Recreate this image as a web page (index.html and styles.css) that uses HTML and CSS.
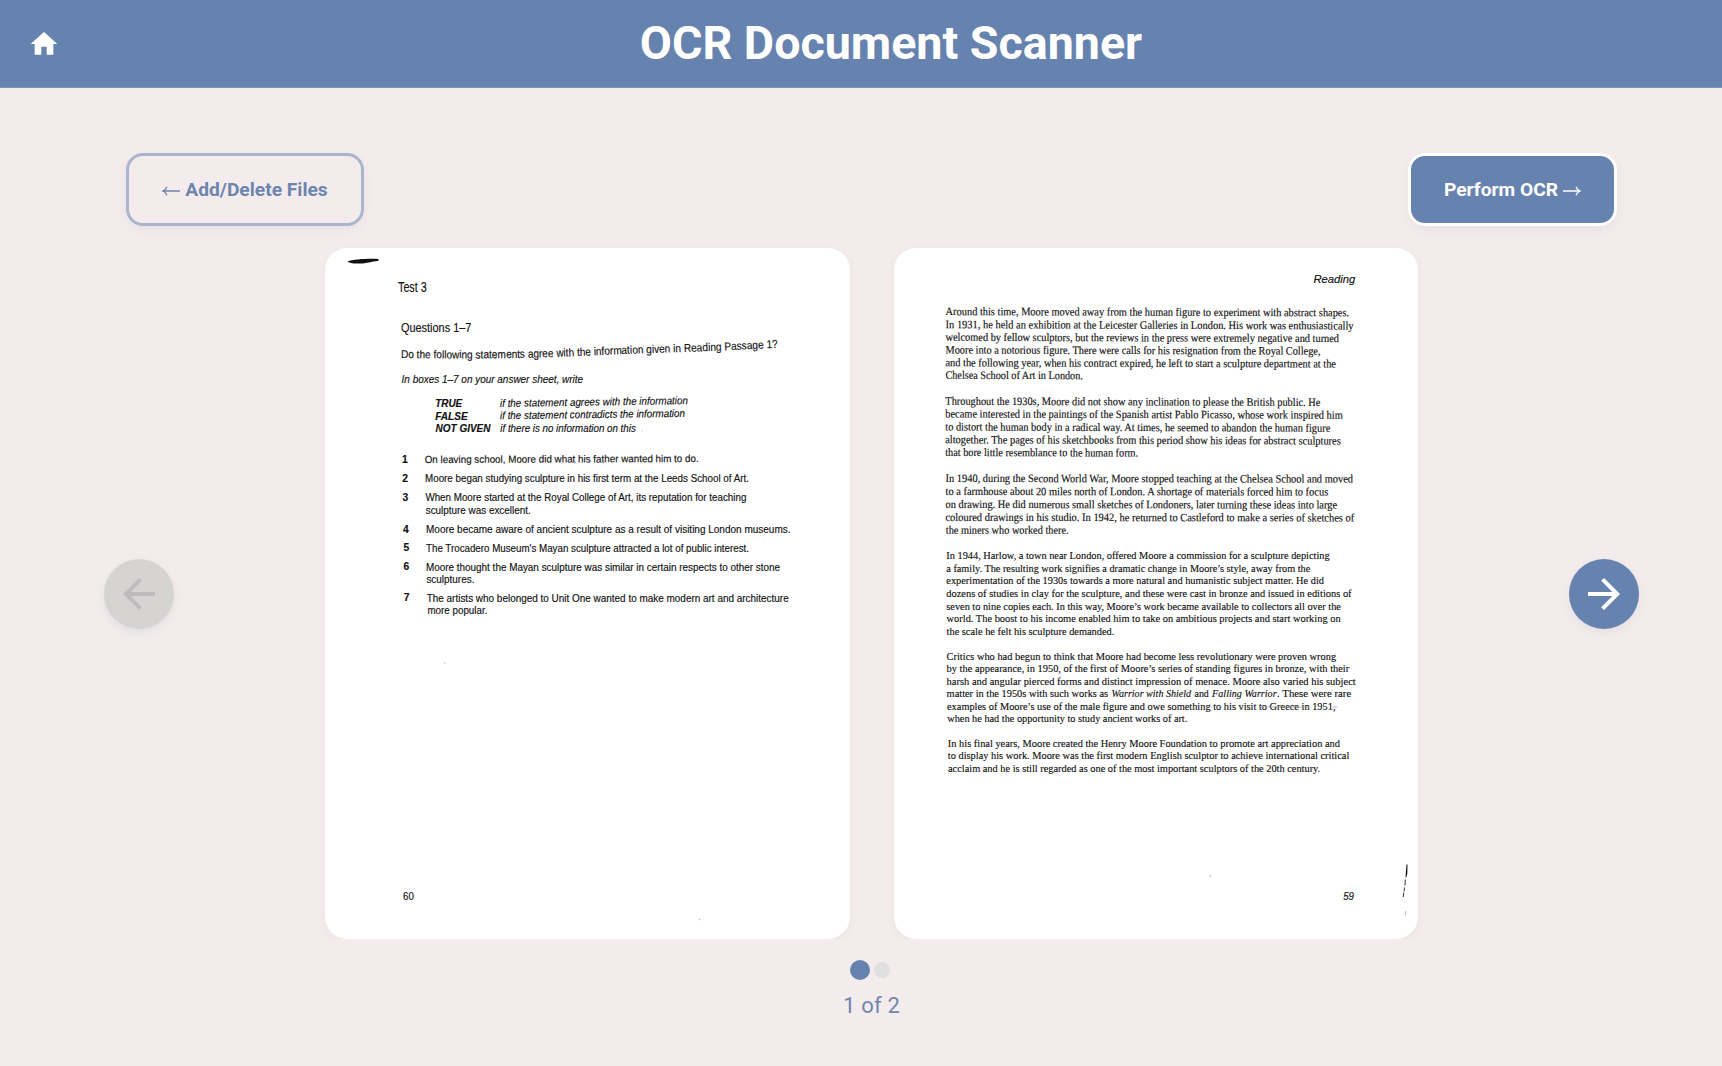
FILE: index.html
```html
<!DOCTYPE html>
<html lang="en">
<head>
<meta charset="utf-8">
<title>OCR Document Scanner</title>
<link rel="stylesheet" href="styles.css">
</head>
<body>
<header class="header">
  <a class="home" aria-label="Home"><svg viewBox="0 0 24 24"><path d="M10 20v-6h4v6h5v-8h3L12 3 2 12h3v8z"/></svg></a>
  <h1 class="title">OCR Document Scanner</h1>
</header>
<main class="main">
  <div class="toolbar">
    <button class="btn btn-outline"><svg class="arrow" viewBox="0 0 18 12"><path d="M1 6h17M5 1.800Q4 4.800 .8 6Q4 7.200 5 10.200"/></svg>Add/Delete Files</button>
    <button class="btn btn-solid">Perform OCR<svg class="arrow" viewBox="0 0 18 12"><path d="M0 6h17M13 1.800Q14 4.800 17.200 6Q14 7.200 13 10.200"/></svg></button>
  </div>
  <section class="carousel">
    <button class="nav nav-disabled" aria-label="Previous"><svg viewBox="0 0 24 24"><path d="M20 11H7.83l5.59-5.59L12 4l-8 8 8 8 1.41-1.41L7.83 13H20v-2z"/></svg></button>
    <div class="pages">
      <article class="page">
        <svg class="scan sans" viewBox="325 247.5 524.5 691.5">
          <path d="M347.500 261c6-2.300 21-3 31-2.500v1.700c-8 1-11 2.600-19 2.800-6 .3-10-.4-12-2z"/>
          <text x="398" y="291.700" font-size="14" textLength="28.700" lengthAdjust="spacingAndGlyphs">Test 3</text>
          <text x="400.900" y="331.500" font-size="12" textLength="70.500" lengthAdjust="spacingAndGlyphs">Questions 1–7</text>
          <path id="bend" fill="none" stroke="none" d="M400.900 357.500C500 359 560 356.500 600 354.500S720 351 790 346.500"/>
          <text font-size="11.400" textLength="377" lengthAdjust="spacingAndGlyphs"><textPath href="#bend" textLength="377" lengthAdjust="spacingAndGlyphs">Do the following statements agree with the information given in Reading Passage 1?</textPath></text>
          <g font-style="italic" font-size="10.800">
            <text x="401.600" y="382" textLength="181.500" lengthAdjust="spacingAndGlyphs">In boxes 1–7 on your answer sheet, write</text>
            <g font-weight="bold">
              <text x="435.200" y="406.500" textLength="27" lengthAdjust="spacingAndGlyphs">TRUE</text>
              <text x="435.200" y="419" textLength="32.500" lengthAdjust="spacingAndGlyphs">FALSE</text>
              <text x="435.500" y="431.300" textLength="55" lengthAdjust="spacingAndGlyphs">NOT GIVEN</text>
            </g>
            <text x="500" y="406.500" textLength="188" lengthAdjust="spacingAndGlyphs" transform="rotate(-.9 500 406.700)">if the statement agrees with the information</text>
            <text x="500" y="418.700" textLength="185" lengthAdjust="spacingAndGlyphs" transform="rotate(-.7 500 419)">if the statement contradicts the information</text>
            <text x="500.300" y="431" textLength="135.500" lengthAdjust="spacingAndGlyphs">if there is no information on this</text>
          </g>
          <g font-weight="bold" font-size="10.300">
            <text x="402" y="462.300">1</text><text x="402.300" y="481.300">2</text><text x="402.600" y="500.200">3</text><text x="403" y="532">4</text><text x="403.400" y="550.900">5</text><text x="403.600" y="569.900">6</text><text x="403.800" y="600.300">7</text>
          </g>
          <g font-size="10.300">
            <text x="424.700" y="462.500" textLength="274" lengthAdjust="spacingAndGlyphs" transform="rotate(-.2 425 462.700)">On leaving school, Moore did what his father wanted him to do.</text>
            <text x="425" y="481.500" textLength="324" lengthAdjust="spacingAndGlyphs">Moore began studying sculpture in his first term at the Leeds School of Art.</text>
            <text x="425.400" y="500.900" textLength="321" lengthAdjust="spacingAndGlyphs">When Moore started at the Royal College of Art, its reputation for teaching</text>
            <text x="425.700" y="513.300" textLength="105" lengthAdjust="spacingAndGlyphs">sculpture was excellent.</text>
            <text x="426" y="532.200" textLength="364.500" lengthAdjust="spacingAndGlyphs">Moore became aware of ancient sculpture as a result of visiting London museums.</text>
            <text x="426" y="551.200" textLength="323" lengthAdjust="spacingAndGlyphs">The Trocadero Museum's Mayan sculpture attracted a lot of public interest.</text>
            <text x="426" y="570.200" textLength="354" lengthAdjust="spacingAndGlyphs">Moore thought the Mayan sculpture was similar in certain respects to other stone</text>
            <text x="426.400" y="582.600" textLength="48" lengthAdjust="spacingAndGlyphs">sculptures.</text>
            <text x="426.700" y="601" textLength="362" lengthAdjust="spacingAndGlyphs">The artists who belonged to Unit One wanted to make modern art and architecture</text>
            <text x="427.400" y="613" textLength="60" lengthAdjust="spacingAndGlyphs">more popular.</text>
          </g>
          <text x="403" y="899" font-size="11" textLength="10.800" lengthAdjust="spacingAndGlyphs">60</text>
          <g class="specks"><circle cx="444.700" cy="662.500" r=".7"/><circle cx="642" cy="430.500" r=".6"/><circle cx="699.500" cy="919" r=".7"/></g>
        </svg>
      </article>
      <article class="page">
        <svg class="scan serif" viewBox="893.5 247.5 524.5 691.5">
          <text class="sans" x="1312.900" y="282.800" font-size="11.800" font-style="italic" textLength="42" lengthAdjust="spacingAndGlyphs">Reading</text>
          <g font-size="11.400">
            <g transform="rotate(.18 945 350)">
              <text x="945" y="314.600" textLength="403.500" lengthAdjust="spacingAndGlyphs">Around this time, Moore moved away from the human figure to experiment with abstract shapes.</text>
              <text x="945" y="327.700" textLength="408" lengthAdjust="spacingAndGlyphs">In 1931, he held an exhibition at the Leicester Galleries in London. His work was enthusiastically</text>
              <text x="945" y="340.300" textLength="393.500" lengthAdjust="spacingAndGlyphs">welcomed by fellow sculptors, but the reviews in the press were extremely negative and turned</text>
              <text x="945" y="353" textLength="375" lengthAdjust="spacingAndGlyphs">Moore into a notorious figure. There were calls for his resignation from the Royal College,</text>
              <text x="945" y="365.800" textLength="390.500" lengthAdjust="spacingAndGlyphs">and the following year, when his contract expired, he left to start a sculpture department at the</text>
              <text x="945" y="378.300" textLength="137.500" lengthAdjust="spacingAndGlyphs">Chelsea School of Art in London.</text>
              <text x="945" y="404.300" textLength="375" lengthAdjust="spacingAndGlyphs">Throughout the 1930s, Moore did not show any inclination to please the British public. He</text>
              <text x="945" y="417" textLength="397.500" lengthAdjust="spacingAndGlyphs">became interested in the paintings of the Spanish artist Pablo Picasso, whose work inspired him</text>
              <text x="945" y="430" textLength="385" lengthAdjust="spacingAndGlyphs">to distort the human body in a radical way. At times, he seemed to abandon the human figure</text>
              <text x="945" y="442.800" textLength="395.500" lengthAdjust="spacingAndGlyphs">altogether. The pages of his sketchbooks from this period show his ideas for abstract sculptures</text>
              <text x="945" y="455.500" textLength="193" lengthAdjust="spacingAndGlyphs">that bore little resemblance to the human form.</text>
            </g>
            <g transform="rotate(.08 945 500)">
              <text x="945" y="481.500" textLength="407.500" lengthAdjust="spacingAndGlyphs">In 1940, during the Second World War, Moore stopped teaching at the Chelsea School and moved</text>
              <text x="945" y="494.500" textLength="382.700" lengthAdjust="spacingAndGlyphs">to a farmhouse about 20 miles north of London. A shortage of materials forced him to focus</text>
              <text x="945" y="507.500" textLength="391.600" lengthAdjust="spacingAndGlyphs">on drawing. He did numerous small sketches of Londoners, later turning these ideas into large</text>
              <text x="945" y="520.400" textLength="408.800" lengthAdjust="spacingAndGlyphs">coloured drawings in his studio. In 1942, he returned to Castleford to make a series of sketches of</text>
              <text x="945.400" y="533.200" textLength="122.700" lengthAdjust="spacingAndGlyphs">the miners who worked there.</text>
            </g>
            <text x="945.800" y="558.700" textLength="383.300" lengthAdjust="spacingAndGlyphs">In 1944, Harlow, a town near London, offered Moore a commission for a sculpture depicting</text>
            <text x="945.800" y="571.400" textLength="364" lengthAdjust="spacingAndGlyphs">a family. The resulting work signifies a dramatic change in Moore’s style, away from the</text>
            <text x="945.800" y="583.900" textLength="377.700" lengthAdjust="spacingAndGlyphs">experimentation of the 1930s towards a more natural and humanistic subject matter. He did</text>
            <text x="945.800" y="596.600" textLength="405.300" lengthAdjust="spacingAndGlyphs">dozens of studies in clay for the sculpture, and these were cast in bronze and issued in editions of</text>
            <text x="945.800" y="609.200" textLength="394.600" lengthAdjust="spacingAndGlyphs">seven to nine copies each. In this way, Moore’s work became available to collectors all over the</text>
            <text x="946.100" y="621.900" textLength="394" lengthAdjust="spacingAndGlyphs">world. The boost to his income enabled him to take on ambitious projects and start working on</text>
            <text x="946.100" y="634.400" textLength="167.700" lengthAdjust="spacingAndGlyphs">the scale he felt his sculpture demanded.</text>
            <text x="946.100" y="659" textLength="389.500" lengthAdjust="spacingAndGlyphs">Critics who had begun to think that Moore had become less revolutionary were proven wrong</text>
            <text x="946.100" y="671.700" textLength="402.600" lengthAdjust="spacingAndGlyphs">by the appearance, in 1950, of the first of Moore’s series of standing figures in bronze, with their</text>
            <text x="946.100" y="684.200" textLength="409.100" lengthAdjust="spacingAndGlyphs">harsh and angular pierced forms and distinct impression of menace. Moore also varied his subject</text>
            <text x="946.100" y="696.600" textLength="161.500" lengthAdjust="spacingAndGlyphs">matter in the 1950s with such works as</text>
            <text x="1111" y="696.600" textLength="79.600" lengthAdjust="spacingAndGlyphs" font-style="italic">Warrior with Shield</text>
            <text x="1194" y="696.600" textLength="14.300" lengthAdjust="spacingAndGlyphs">and</text>
            <text x="1211.600" y="696.600" textLength="64.500" lengthAdjust="spacingAndGlyphs" font-style="italic">Falling Warrior</text>
            <text x="1276.600" y="696.600" textLength="74.100" lengthAdjust="spacingAndGlyphs">. These were rare</text>
            <text x="946.500" y="709.200" textLength="388.500" lengthAdjust="spacingAndGlyphs">examples of Moore’s use of the male figure and owe something to his visit to Greece in 1951,</text>
            <text x="946.800" y="721.900" textLength="240" lengthAdjust="spacingAndGlyphs">when he had the opportunity to study ancient works of art.</text>
            <text x="947.300" y="746.200" textLength="392.200" lengthAdjust="spacingAndGlyphs">In his final years, Moore created the Henry Moore Foundation to promote art appreciation and</text>
            <text x="947.300" y="758.600" textLength="401.500" lengthAdjust="spacingAndGlyphs">to display his work. Moore was the first modern English sculptor to achieve international critical</text>
            <text x="947.500" y="771" textLength="372.200" lengthAdjust="spacingAndGlyphs">acclaim and he is still regarded as one of the most important sculptors of the 20th century.</text>
          </g>
          <path class="scratch" d="M1260 706.500h49M1332 706.500h5"/>
          <text class="sans" x="1342.700" y="899.300" font-size="11" font-style="italic" textLength="10.800" lengthAdjust="spacingAndGlyphs">59</text>
          <path d="M1406 864h1l-.2 9-1.300 4.500-.5-1z"/>
          <path class="edge" d="M1404.800 879l-.3 6M1404 887l-.5 4M1403.300 892l-.6 4.500"/>
          <path class="edge faint" d="M1405.500 910.500l-.8 4.500"/>
          <g class="specks"><circle cx="1210" cy="875.500" r=".8"/></g>
        </svg>
      </article>
    </div>
    <button class="nav" aria-label="Next"><svg viewBox="0 0 24 24"><path d="M12 4l-1.410 1.410L16.170 11H4v2h12.170l-5.580 5.590L12 20l8-8z"/></svg></button>
  </section>
  <div class="dots"><span class="dot dot-active"></span><span class="dot"></span></div>
  <p class="counter">1 of 2</p>
</main>
</body>
</html>
```
FILE: styles.css
```css
* { box-sizing: border-box; }
body { margin: 0; min-height: 100vh; background: #f4ecec; font-family: Roboto, "Liberation Sans", sans-serif; }

.header { display: flex; align-items: center; height: 88px; padding-left: 28px; background: #6682ae; border-bottom: 1px solid #8095b8; color: #fff; }
.home { display: flex; width: 32px; }
.home svg { width: 32px; height: 32px; fill: #fff; }
.title { flex: 1; margin: 0; padding-bottom: 1px; text-align: center; font-size: 46.600px; line-height: 54px; font-weight: 700; }

.main { padding: 65px 83px 0 104px; }
.toolbar { display: flex; justify-content: space-between; padding: 0 22px; }
.btn { display: flex; align-items: center; justify-content: center; gap: 5px; height: 73px; border-radius: 17px; font: 700 19.200px/24px Roboto, sans-serif; box-shadow: 0 4px 10px rgba(80, 90, 120, .07); white-space: nowrap; padding: 0; }
.btn-outline { width: 238px; color: #6c85af; background: #f4ecec; border: 3px solid #a9b5cd; }
.btn-solid { width: 209px; color: #fff; background: #6682ae; border: 3px solid #fff; }
.arrow { width: 18px; height: 12px; margin-top: 3px; fill: none; stroke: currentColor; stroke-width: 1.300; }

.carousel { display: flex; align-items: center; justify-content: space-between; }
.nav { display: flex; align-items: center; justify-content: center; width: 70px; height: 70px; margin-top: 22px; padding: 0; border: 0; border-radius: 50%; background: #6682ae; box-shadow: 0 4px 10px rgba(80, 90, 120, .09); }
.nav svg { width: 48px; height: 48px; fill: #fff; }
.nav-disabled { background: #d6d3d3; }
.nav-disabled svg { fill: #bdbbbb; }
.pages { display: flex; gap: 44px; padding: 21.500px 22px 0; overflow: hidden; }
.page { width: 524.500px; height: 691.500px; border-radius: 22px; background: #fff; box-shadow: 0 3px 9px rgba(80, 60, 60, .05); overflow: hidden; }
.scan { display: block; width: 100%; height: 100%; fill: #111; }
.scan text { stroke: #111; stroke-width: .15px; }
.sans { font-family: "Liberation Sans", Arial, sans-serif; }
.serif { font-family: "Liberation Serif", "Times New Roman", serif; }
.specks { fill: #aaa; }
.scratch { stroke: #999; stroke-width: .7; }
.edge { stroke: #333; stroke-width: 1; fill: none; }
.faint { stroke: #bbb; }

.dots { display: flex; align-items: center; justify-content: center; gap: 4px; height: 20px; margin-top: 20.500px; padding-right: 3px; }
.dot { width: 16px; height: 16px; border-radius: 50%; background: #e0e0e0; }
.dot-active { width: 20px; height: 20px; background: #6682ae; }
.counter { margin: 13px 0 0; text-align: center; font-size: 22px; line-height: 26px; letter-spacing: .2px; color: #6f87b0; }
```
